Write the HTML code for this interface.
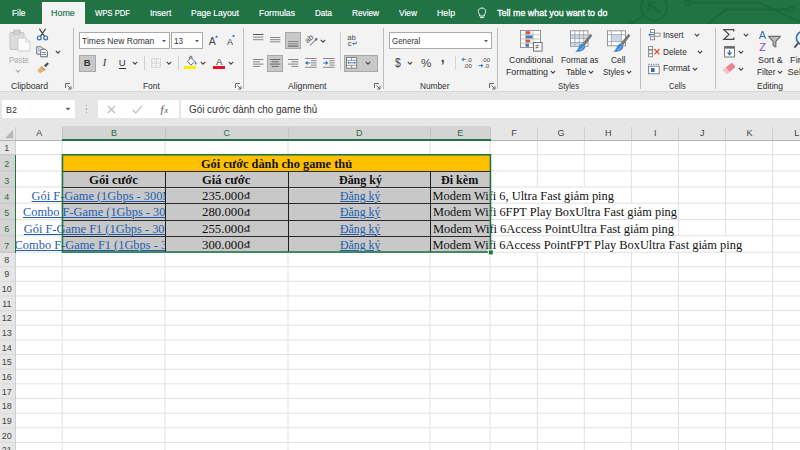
<!DOCTYPE html>
<html lang="vi"><head><meta charset="utf-8"><title>Excel</title>
<style>
html,body{margin:0;padding:0}
body{width:800px;height:450px;overflow:hidden;background:#fff;position:relative;font-family:'Liberation Sans', sans-serif}
#app{position:absolute;left:0;top:0;width:800px;height:450px;overflow:hidden;background:#fff}
#app div,#app span,#app svg{position:absolute;display:block;white-space:pre}
#app svg{overflow:visible}
</style></head><body><div id="app">
<div style="left:0px;top:0px;width:800px;height:24px;background:#217346;"></div>
<svg style="left:600px;top:0px" width="200" height="24" viewBox="0 0 200 24"><g fill="none" stroke="#1b683c" stroke-width="2.1">
<circle cx="54.2" cy="7.6" r="13"/><path d="M59.6 12.6 L50 3.6 M49 10 L49 2.6 L56.4 2.6" stroke-width="2.8"/>
<path d="M31.3 22 Q38 21 42 16" stroke-width="1.6"/><circle cx="31" cy="22.6" r="1.8" stroke-width="1.4"/>
<circle cx="87.6" cy="2.7" r="2.3" stroke-width="1.6"/><path d="M90 2.7 L159.6 2.7 L182 13.5 L200 22" stroke-width="1.9"/>
<path d="M107 25 L125.6 9.5 L188 9.5" stroke-width="1.9"/><circle cx="191.4" cy="9.2" r="2.5" stroke-width="1.6"/>
</g></svg>
<div style="left:42px;top:2px;width:42.5px;height:23px;background:#f3f3f3;"></div>
<span style="left:11.80px;top:5.70px;height:14px;line-height:14px;font:normal normal 9px/14px 'Liberation Sans', sans-serif;color:#fff;transform:scaleX(0.9231);transform-origin:0 0;-webkit-text-stroke:0.15px #fff;">File</span>
<span style="left:50.80px;top:5.70px;height:14px;line-height:14px;font:normal normal 9px/14px 'Liberation Sans', sans-serif;color:#217346;transform:scaleX(0.9910);transform-origin:0 0;-webkit-text-stroke:0.15px #217346;">Home</span>
<span style="left:95.00px;top:5.70px;height:14px;line-height:14px;font:normal normal 9px/14px 'Liberation Sans', sans-serif;color:#fff;transform:scaleX(0.8533);transform-origin:0 0;-webkit-text-stroke:0.15px #fff;">WPS PDF</span>
<span style="left:149.50px;top:5.70px;height:14px;line-height:14px;font:normal normal 9px/14px 'Liberation Sans', sans-serif;color:#fff;transform:scaleX(0.9460);transform-origin:0 0;-webkit-text-stroke:0.15px #fff;">Insert</span>
<span style="left:191.00px;top:5.70px;height:14px;line-height:14px;font:normal normal 9px/14px 'Liberation Sans', sans-serif;color:#fff;transform:scaleX(0.9496);transform-origin:0 0;-webkit-text-stroke:0.15px #fff;">Page Layout</span>
<span style="left:258.50px;top:5.70px;height:14px;line-height:14px;font:normal normal 9px/14px 'Liberation Sans', sans-serif;color:#fff;transform:scaleX(0.9596);transform-origin:0 0;-webkit-text-stroke:0.15px #fff;">Formulas</span>
<span style="left:314.50px;top:5.70px;height:14px;line-height:14px;font:normal normal 9px/14px 'Liberation Sans', sans-serif;color:#fff;transform:scaleX(0.8940);transform-origin:0 0;-webkit-text-stroke:0.15px #fff;">Data</span>
<span style="left:352.00px;top:5.70px;height:14px;line-height:14px;font:normal normal 9px/14px 'Liberation Sans', sans-serif;color:#fff;transform:scaleX(0.9148);transform-origin:0 0;-webkit-text-stroke:0.15px #fff;">Review</span>
<span style="left:398.50px;top:5.70px;height:14px;line-height:14px;font:normal normal 9px/14px 'Liberation Sans', sans-serif;color:#fff;transform:scaleX(0.9298);transform-origin:0 0;-webkit-text-stroke:0.15px #fff;">View</span>
<span style="left:437.00px;top:5.70px;height:14px;line-height:14px;font:normal normal 9px/14px 'Liberation Sans', sans-serif;color:#fff;transform:scaleX(0.9722);transform-origin:0 0;-webkit-text-stroke:0.15px #fff;">Help</span>
<span style="left:497.00px;top:5.70px;height:14px;line-height:14px;font:normal normal 9px/14px 'Liberation Sans', sans-serif;color:#fff;transform:scaleX(0.9949);transform-origin:0 0;-webkit-text-stroke:0.3px #fff;">Tell me what you want to do</span>
<svg style="left:476px;top:5px" width="12" height="15" viewBox="0 0 12 15"><g fill="none" stroke="#fff" stroke-width="1"><path d="M3.6 9.2 C1.6 7.6 1.6 3.2 6 3 C10.4 3.2 10.4 7.6 8.4 9.2 L8.4 11 L3.6 11 Z"/><path d="M4.2 12.6 L7.8 12.6"/></g></svg>
<div style="left:0px;top:24px;width:800px;height:67.5px;background:#f3f3f3;"></div>
<div style="left:0px;top:91px;width:800px;height:1px;background:#d8d8d8;"></div>
<div style="left:73px;top:28px;width:1px;height:61px;background:#bebebe;"></div>
<div style="left:243px;top:28px;width:1px;height:61px;background:#bebebe;"></div>
<div style="left:383px;top:28px;width:1px;height:61px;background:#bebebe;"></div>
<div style="left:497px;top:28px;width:1px;height:61px;background:#bebebe;"></div>
<div style="left:640px;top:28px;width:1px;height:61px;background:#bebebe;"></div>
<div style="left:715px;top:28px;width:1px;height:61px;background:#bebebe;"></div>
<span style="left:10.50px;top:79.00px;height:14px;line-height:14px;font:normal normal 9.3px/14px 'Liberation Sans', sans-serif;color:#2e2e2e;transform:scaleX(0.9297);transform-origin:0 0;">Clipboard</span>
<span style="left:143.30px;top:79.00px;height:14px;line-height:14px;font:normal normal 9.3px/14px 'Liberation Sans', sans-serif;color:#2e2e2e;transform:scaleX(0.8974);transform-origin:0 0;">Font</span>
<span style="left:288.00px;top:79.00px;height:14px;line-height:14px;font:normal normal 9.3px/14px 'Liberation Sans', sans-serif;color:#2e2e2e;transform:scaleX(0.9312);transform-origin:0 0;">Alignment</span>
<span style="left:419.50px;top:79.00px;height:14px;line-height:14px;font:normal normal 9.3px/14px 'Liberation Sans', sans-serif;color:#2e2e2e;transform:scaleX(0.8918);transform-origin:0 0;">Number</span>
<span style="left:558.00px;top:79.00px;height:14px;line-height:14px;font:normal normal 9.3px/14px 'Liberation Sans', sans-serif;color:#2e2e2e;transform:scaleX(0.8291);transform-origin:0 0;">Styles</span>
<span style="left:668.80px;top:79.00px;height:14px;line-height:14px;font:normal normal 9.3px/14px 'Liberation Sans', sans-serif;color:#2e2e2e;transform:scaleX(0.8079);transform-origin:0 0;">Cells</span>
<span style="left:757.00px;top:79.00px;height:14px;line-height:14px;font:normal normal 9.3px/14px 'Liberation Sans', sans-serif;color:#2e2e2e;transform:scaleX(0.9143);transform-origin:0 0;">Editing</span>
<svg style="left:64.5px;top:83px" width="7" height="7" viewBox="0 0 7 7"><path d="M0.5 5 L0.5 0.5 L5 0.5" fill="none" stroke="#666" stroke-width="1"/><path d="M2.5 2.5 L6 6 M6 3.2 L6 6 L3.2 6" fill="none" stroke="#666" stroke-width="1"/></svg>
<svg style="left:235px;top:83px" width="7" height="7" viewBox="0 0 7 7"><path d="M0.5 5 L0.5 0.5 L5 0.5" fill="none" stroke="#666" stroke-width="1"/><path d="M2.5 2.5 L6 6 M6 3.2 L6 6 L3.2 6" fill="none" stroke="#666" stroke-width="1"/></svg>
<svg style="left:374px;top:83px" width="7" height="7" viewBox="0 0 7 7"><path d="M0.5 5 L0.5 0.5 L5 0.5" fill="none" stroke="#666" stroke-width="1"/><path d="M2.5 2.5 L6 6 M6 3.2 L6 6 L3.2 6" fill="none" stroke="#666" stroke-width="1"/></svg>
<svg style="left:489px;top:83px" width="7" height="7" viewBox="0 0 7 7"><path d="M0.5 5 L0.5 0.5 L5 0.5" fill="none" stroke="#666" stroke-width="1"/><path d="M2.5 2.5 L6 6 M6 3.2 L6 6 L3.2 6" fill="none" stroke="#666" stroke-width="1"/></svg>
<svg style="left:9px;top:29px" width="22" height="23" viewBox="0 0 22 23"><rect x="1" y="3.5" width="14" height="17" rx="1" fill="#dcdcdc" stroke="#c4c4c4"/>
<rect x="4.5" y="1" width="7" height="4.5" rx="1" fill="#cfcfcf" stroke="#bcbcbc" stroke-width=".8"/>
<path d="M9 9 L17 9 L21 13 L21 22 L9 22 Z" fill="#fbfbfb" stroke="#c9c9c9" stroke-width=".9"/><path d="M17 9 L17 13 L21 13" fill="none" stroke="#c9c9c9" stroke-width=".9"/></svg>
<span style="left:8.80px;top:53.00px;height:14px;line-height:14px;font:normal normal 9px/14px 'Liberation Sans', sans-serif;color:#a6a6a6;transform:scaleX(0.8473);transform-origin:0 0;">Paste</span>
<svg style="left:13.5px;top:67.3px" width="8" height="8" viewBox="-4 -4 8 8"><path d="M-2.2 -1.1 L0 1.1 L2.2 -1.1" fill="none" stroke="#b0b0b0" stroke-width="1.1"/></svg>
<svg style="left:36px;top:28px" width="13" height="13" viewBox="0 0 13 13"><g fill="none" stroke-linecap="round"><path d="M3.6 1.2 L8.4 8.2 M9.4 1.2 L4.6 8.2" stroke="#444" stroke-width="1.2"/>
<circle cx="3.3" cy="9.9" r="1.9" stroke="#2f6fb7" stroke-width="1.2"/><circle cx="9.7" cy="9.9" r="1.9" stroke="#2f6fb7" stroke-width="1.2"/></g></svg>
<svg style="left:36px;top:45.5px" width="13" height="12" viewBox="0 0 13 12"><g fill="#fff" stroke="#555" stroke-width=".9"><path d="M0.8 0.8 L5.2 0.8 L7.2 2.8 L7.2 8 L0.8 8 Z"/><path d="M4.8 3.2 L9.2 3.2 L11.4 5.4 L11.4 10.8 L4.8 10.8 Z"/></g>
<path d="M6.2 6.5 L10 6.5 M6.2 8.5 L10 8.5 M2 3 L3.8 3 M2 5 L3.8 5" stroke="#2f6fb7" stroke-width=".8"/></svg>
<svg style="left:54px;top:48px" width="8" height="8" viewBox="-4 -4 8 8"><path d="M-2.2 -1.1 L0 1.1 L2.2 -1.1" fill="none" stroke="#444" stroke-width="1.1"/></svg>
<svg style="left:36.5px;top:62px" width="12" height="12" viewBox="0 0 12 12"><path d="M7.2 3.6 L10.4 0.8 L11.4 1.8 L8.6 5" fill="#555" stroke="#444" stroke-width=".8"/>
<path d="M4.6 4.4 L7.8 7.6 L6.4 9" fill="#666" stroke="#555" stroke-width=".6"/>
<path d="M4.4 4.6 L7.4 7.8 L3.2 11 L0.8 8.4 Z" fill="#e9b56c" stroke="#d79a44" stroke-width=".6"/></svg>
<div style="left:79px;top:32.4px;width:90.6px;height:16.4px;background:#fff;box-sizing:border-box;border:1px solid #ababab"></div>
<span style="left:82.20px;top:34.00px;height:14px;line-height:14px;font:normal normal 9px/14px 'Liberation Sans', sans-serif;color:#333;transform:scaleX(0.9490);transform-origin:0 0;">Times New Roman</span>
<svg style="left:159.8px;top:37.2px" width="8" height="8" viewBox="-4 -4 8 8"><path d="M-1.9 -0.95 L1.9 -0.95 L0 1.25 Z" fill="#555"/></svg>
<div style="left:171px;top:32.4px;width:32px;height:16.4px;background:#fff;box-sizing:border-box;border:1px solid #ababab"></div>
<span style="left:173.90px;top:34.00px;height:14px;line-height:14px;font:normal normal 9px/14px 'Liberation Sans', sans-serif;color:#333;transform:scaleX(0.8886);transform-origin:0 0;">13</span>
<svg style="left:193px;top:37.2px" width="8" height="8" viewBox="-4 -4 8 8"><path d="M-1.9 -0.95 L1.9 -0.95 L0 1.25 Z" fill="#555"/></svg>
<span style="left:208.80px;top:33.30px;height:16px;line-height:16px;font:normal normal 10.5px/16px 'Liberation Sans', sans-serif;color:#444;">A</span>
<svg style="left:215px;top:35.2px" width="4" height="3" viewBox="0 0 4 3"><path d="M0 2.4 L1.6 0.3 L3.2 2.4 Z" fill="#2f6fb7"/></svg>
<span style="left:227.00px;top:35.00px;height:14px;line-height:14px;font:normal normal 9px/14px 'Liberation Sans', sans-serif;color:#444;">A</span>
<svg style="left:232.4px;top:35.2px" width="4" height="3" viewBox="0 0 4 3"><path d="M0 0.3 L1.6 2.4 L3.2 0.3 Z" fill="#2f6fb7"/></svg>
<div style="left:79px;top:55px;width:16.6px;height:16.6px;background:#c8c8c8;box-sizing:border-box;border:1px solid #a9a9a9"></div>
<span style="left:83.76px;top:56.00px;height:14px;line-height:14px;font:normal bold 9.5px/14px 'Liberation Sans', sans-serif;color:#333;">B</span>
<span style="left:102.65px;top:55.00px;height:16px;line-height:16px;font:italic normal 10.5px/16px 'Liberation Serif', serif;color:#333;">I</span>
<span style="left:118.86px;top:55.60px;height:14px;line-height:14px;font:normal normal 9.5px/14px 'Liberation Sans', sans-serif;color:#333;">U</span>
<div style="left:119.2px;top:68px;width:6.4px;height:1px;background:#333;"></div>
<svg style="left:131.3px;top:59.3px" width="8" height="8" viewBox="-4 -4 8 8"><path d="M-2.2 -1.1 L0 1.1 L2.2 -1.1" fill="none" stroke="#444" stroke-width="1.1"/></svg>
<div style="left:144px;top:56px;width:1px;height:14px;background:#d0d0d0;"></div>
<svg style="left:151px;top:58px" width="11" height="11" viewBox="0 0 11 11"><g fill="none" stroke="#c4c4c4" stroke-width="1" stroke-dasharray="1.2 0.8"><rect x="0.7" y="0.7" width="8.8" height="8.6"/><path d="M5.1 0.7 L5.1 9.3 M0.7 5 L9.5 5"/></g></svg>
<svg style="left:165.3px;top:59.3px" width="8" height="8" viewBox="-4 -4 8 8"><path d="M-2.2 -1.1 L0 1.1 L2.2 -1.1" fill="none" stroke="#444" stroke-width="1.1"/></svg>
<div style="left:178px;top:56px;width:1px;height:14px;background:#d0d0d0;"></div>
<svg style="left:185px;top:55.5px" width="12" height="10" viewBox="0 0 12 10"><path d="M2.4 5.2 L6 1.6 L9.8 5.4 L6 9.2 Z" fill="#fff" stroke="#555" stroke-width=".9" stroke-linejoin="round"/><path d="M4.6 3.4 L4.6 1.4 C4.6 -0.2 7 -0.2 7 1.4 L7 2.6" fill="none" stroke="#555" stroke-width=".9"/>
<path d="M10.6 5.4 C11.8 7 11.8 8.4 10.7 8.6 C9.6 8.4 9.6 7 10.6 5.4Z" fill="#2f6fb7"/></svg>
<div style="left:184.3px;top:66px;width:11.8px;height:3px;background:#ffeb00;"></div>
<svg style="left:199.3px;top:59.3px" width="8" height="8" viewBox="-4 -4 8 8"><path d="M-2.2 -1.1 L0 1.1 L2.2 -1.1" fill="none" stroke="#444" stroke-width="1.1"/></svg>
<span style="left:216.03px;top:53.70px;height:15px;line-height:15px;font:normal normal 9.8px/15px 'Liberation Sans', sans-serif;color:#444;">A</span>
<div style="left:213px;top:66px;width:11.6px;height:3px;background:#e8112d;"></div>
<svg style="left:227.3px;top:59.3px" width="8" height="8" viewBox="-4 -4 8 8"><path d="M-2.2 -1.1 L0 1.1 L2.2 -1.1" fill="none" stroke="#444" stroke-width="1.1"/></svg>
<svg style="left:252.7px;top:33.6px" width="10.4" height="7.800000000000001" viewBox="0 0 10.4 7.800000000000001"><rect x="0.00" y="0.00" width="10.40" height="1" fill="#555"/><rect x="0.00" y="2.60" width="10.40" height="1" fill="#858585"/><rect x="0.00" y="5.20" width="10.40" height="1" fill="#858585"/></svg>
<svg style="left:270.2px;top:37.4px" width="10.4" height="6.6000000000000005" viewBox="0 0 10.4 6.6000000000000005"><rect x="0.00" y="0.00" width="10.40" height="1" fill="#858585"/><rect x="0.00" y="2.20" width="10.40" height="1" fill="#858585"/><rect x="0.00" y="4.40" width="10.40" height="1" fill="#858585"/></svg>
<div style="left:285px;top:32px;width:16px;height:16.7px;background:#c8c8c8;box-sizing:border-box;border:1px solid #a9a9a9"></div>
<svg style="left:287.8px;top:41.2px" width="10.4" height="6.8999999999999995" viewBox="0 0 10.4 6.8999999999999995"><rect x="0.00" y="0.00" width="10.40" height="1" fill="#858585"/><rect x="0.00" y="2.30" width="10.40" height="1" fill="#858585"/><rect x="0.00" y="4.60" width="10.40" height="1" fill="#555"/></svg>
<svg style="left:304.5px;top:33.5px" width="14" height="13" viewBox="0 0 14 13"><g transform="translate(2.6 9.6) rotate(-43)"><text x="0" y="0" font-family="Liberation Sans, sans-serif" font-size="7.8" fill="#444">ab</text></g>
<path d="M4.8 11.6 L11.2 5.4" stroke="#555" stroke-width="1"/><path d="M12.6 4 L9.6 4.8 L11.8 7 Z" fill="#555"/></svg>
<svg style="left:318.7px;top:37.2px" width="8" height="8" viewBox="-4 -4 8 8"><path d="M-2.2 -1.1 L0 1.1 L2.2 -1.1" fill="none" stroke="#444" stroke-width="1.1"/></svg>
<div style="left:340px;top:32px;width:1px;height:38px;background:#d0d0d0;"></div>
<svg style="left:346.5px;top:34px" width="12" height="13" viewBox="0 0 12 13"><text x="0.3" y="6.2" font-family="Liberation Sans, sans-serif" font-size="7.6" fill="#444">ab</text>
<text x="0.8" y="11.6" font-family="Liberation Sans, sans-serif" font-size="7.6" fill="#444">c</text>
<path d="M9.4 7.6 L9.4 9.6 L6.4 9.6" fill="none" stroke="#2f6fb7" stroke-width=".9"/><path d="M5.2 9.6 L7.2 8.2 L7.2 11 Z" fill="#2f6fb7"/></svg>
<svg style="left:252.7px;top:58.7px" width="10.4" height="9.2" viewBox="0 0 10.4 9.2"><rect x="0.00" y="0.00" width="10.40" height="1" fill="#858585"/><rect x="0.00" y="2.30" width="7.07" height="1" fill="#858585"/><rect x="0.00" y="4.60" width="10.40" height="1" fill="#858585"/><rect x="0.00" y="6.90" width="7.07" height="1" fill="#858585"/></svg>
<div style="left:267px;top:55px;width:16px;height:16.6px;background:#c8c8c8;box-sizing:border-box;border:1px solid #a9a9a9"></div>
<svg style="left:269.9px;top:58.7px" width="10.4" height="9.2" viewBox="0 0 10.4 9.2"><rect x="0.00" y="0.00" width="10.40" height="1" fill="#6a6a6a"/><rect x="1.66" y="2.30" width="7.07" height="1" fill="#6a6a6a"/><rect x="0.00" y="4.60" width="10.40" height="1" fill="#6a6a6a"/><rect x="1.66" y="6.90" width="7.07" height="1" fill="#6a6a6a"/></svg>
<svg style="left:287.6px;top:58.7px" width="10.4" height="9.2" viewBox="0 0 10.4 9.2"><rect x="0.00" y="0.00" width="10.40" height="1" fill="#858585"/><rect x="3.33" y="2.30" width="7.07" height="1" fill="#858585"/><rect x="0.00" y="4.60" width="10.40" height="1" fill="#858585"/><rect x="3.33" y="6.90" width="7.07" height="1" fill="#858585"/></svg>
<svg style="left:305.3px;top:57.8px" width="12" height="10" viewBox="0 0 12 10"><g fill="#8a8a8a"><rect x="0" y="0" width="11.6" height="1"/><rect x="6" y="2.2" width="5.6" height="1"/><rect x="6" y="4.4" width="5.6" height="1"/><rect x="6" y="6.6" width="5.6" height="1"/><rect x="0" y="8.8" width="11.6" height="1"/></g>
<path d="M0 4.9 L2.6 2.7 L2.6 4.4 L5.2 4.4 L5.2 5.4 L2.6 5.4 L2.6 7.1 Z" fill="#2f6fb7"/></svg>
<svg style="left:323px;top:57.8px" width="12" height="10" viewBox="0 0 12 10"><g fill="#8a8a8a"><rect x="0" y="0" width="11.6" height="1"/><rect x="6.2" y="2.2" width="5.4" height="1"/><rect x="6.2" y="4.4" width="5.4" height="1"/><rect x="6.2" y="6.6" width="5.4" height="1"/><rect x="0" y="8.8" width="11.6" height="1"/></g>
<path d="M5.4 4.9 L2.8 2.7 L2.8 4.4 L0.2 4.4 L0.2 5.4 L2.8 5.4 L2.8 7.1 Z" fill="#2f6fb7"/></svg>
<div style="left:343.5px;top:55px;width:34.4px;height:16.6px;background:#c8c8c8;box-sizing:border-box;border:1px solid #a9a9a9"></div>
<svg style="left:346px;top:57px" width="12" height="12" viewBox="0 0 12 12"><rect x="0.5" y="0.5" width="10.2" height="10.6" fill="#fff" stroke="#777" stroke-width=".9"/><path d="M0.5 3.3 L10.7 3.3 M0.5 8.3 L10.7 8.3 M5.6 0.5 L5.6 3.3 M5.6 8.3 L5.6 11.1" stroke="#777" stroke-width=".8" fill="none"/>
<path d="M2 5.8 L9.2 5.8" stroke="#2f6fb7" stroke-width=".9"/><path d="M1.2 5.8 L3 4.5 L3 7.1 Z M10 5.8 L8.2 4.5 L8.2 7.1 Z" fill="#2f6fb7"/></svg>
<svg style="left:364.2px;top:59.3px" width="8" height="8" viewBox="-4 -4 8 8"><path d="M-2.2 -1.1 L0 1.1 L2.2 -1.1" fill="none" stroke="#444" stroke-width="1.1"/></svg>
<div style="left:389px;top:32.4px;width:102.7px;height:16.4px;background:#fff;box-sizing:border-box;border:1px solid #ababab"></div>
<span style="left:392.30px;top:34.00px;height:14px;line-height:14px;font:normal normal 9px/14px 'Liberation Sans', sans-serif;color:#333;transform:scaleX(0.8804);transform-origin:0 0;">General</span>
<svg style="left:482.3px;top:37.2px" width="8" height="8" viewBox="-4 -4 8 8"><path d="M-1.9 -0.95 L1.9 -0.95 L0 1.25 Z" fill="#555"/></svg>
<span style="left:394.60px;top:53.80px;height:18px;line-height:18px;font:normal normal 12px/18px 'Liberation Sans', sans-serif;color:#444;transform:scaleX(0.8673);transform-origin:0 0;">$</span>
<svg style="left:406px;top:59.3px" width="8" height="8" viewBox="-4 -4 8 8"><path d="M-2.2 -1.1 L0 1.1 L2.2 -1.1" fill="none" stroke="#444" stroke-width="1.1"/></svg>
<span style="left:421.00px;top:55.00px;height:16px;line-height:16px;font:normal normal 10.5px/16px 'Liberation Sans', sans-serif;color:#444;transform:scaleX(1.1023);transform-origin:0 0;">%</span>
<span style="left:440.80px;top:47.00px;height:20px;line-height:20px;font:normal bold 14px/20px 'Liberation Sans', sans-serif;color:#444;">,</span>
<div style="left:454.5px;top:56px;width:1px;height:14px;background:#d5d5d5;"></div>
<svg style="left:460.8px;top:56.6px" width="12" height="12" viewBox="0 0 12 12"><path d="M0.4 2.4 L2.6 0.6 L2.6 4.2 Z" fill="#2f6fb7"/><path d="M2.4 2.4 L5 2.4" stroke="#2f6fb7" stroke-width=".9"/>
<text x="5.6" y="5" font-family="Liberation Sans, sans-serif" font-size="6.1" fill="#444">.0</text><text x="2.4" y="10.6" font-family="Liberation Sans, sans-serif" font-size="6.1" fill="#444">.00</text></svg>
<svg style="left:478px;top:56.6px" width="12" height="12" viewBox="0 0 12 12"><text x="3.6" y="5" font-family="Liberation Sans, sans-serif" font-size="6.1" fill="#444">.00</text><text x="6" y="10.6" font-family="Liberation Sans, sans-serif" font-size="6.1" fill="#444">.0</text>
<path d="M5.4 8.6 L3.2 6.8 L3.2 10.4 Z" fill="#2f6fb7"/><path d="M0.6 8.6 L3.4 8.6" stroke="#2f6fb7" stroke-width=".9"/></svg>
<svg style="left:520px;top:30px" width="23" height="22" viewBox="0 0 23 22"><rect x="0.5" y="0.5" width="20" height="17" fill="#fff" stroke="#8a8a8a" stroke-width=".9"/>
<path d="M0.5 4.7 L20.5 4.7 M0.5 9 L20.5 9 M0.5 13.2 L20.5 13.2 M5.5 0.5 L5.5 17.5 M13 0.5 L13 17.5" stroke="#b5b5b5" stroke-width=".8"/>
<rect x="6" y="1.2" width="4.2" height="3" fill="#d9573b"/><rect x="6" y="5.4" width="6.6" height="3" fill="#3f79c1"/><rect x="6" y="9.6" width="4.2" height="3" fill="#d9573b"/><rect x="6" y="13.8" width="3" height="3" fill="#3f79c1"/>
<rect x="13.5" y="12.5" width="8.6" height="8.6" fill="#f7f7f7" stroke="#666" stroke-width=".9"/><text x="15.3" y="19.4" font-family="Liberation Sans, sans-serif" font-size="7" fill="#444">≠</text></svg>
<span style="left:508.80px;top:53.00px;height:14px;line-height:14px;font:normal normal 9.3px/14px 'Liberation Sans', sans-serif;color:#2e2e2e;transform:scaleX(0.9499);transform-origin:0 0;">Conditional</span>
<span style="left:505.50px;top:64.70px;height:14px;line-height:14px;font:normal normal 9.3px/14px 'Liberation Sans', sans-serif;color:#2e2e2e;transform:scaleX(0.9451);transform-origin:0 0;">Formatting</span>
<svg style="left:549px;top:68.3px" width="8" height="8" viewBox="-4 -4 8 8"><path d="M-2.2 -1.1 L0 1.1 L2.2 -1.1" fill="none" stroke="#444" stroke-width="1.1"/></svg>
<svg style="left:569.5px;top:30px" width="23" height="22" viewBox="0 0 23 22"><rect x="0.5" y="0.8" width="17.5" height="15.5" fill="#fff" stroke="#8a8a8a" stroke-width=".9"/>
<rect x="1" y="5" width="16.5" height="3.4" fill="#c7d9ef"/><rect x="1" y="12" width="13" height="3.6" fill="#c7d9ef"/>
<path d="M0.5 4.7 L18 4.7 M0.5 8.6 L18 8.6 M0.5 12.4 L18 12.4 M4.9 0.8 L4.9 16.3 M9.3 0.8 L9.3 16.3 M13.7 0.8 L13.7 16.3" stroke="#9d9d9d" stroke-width=".8"/>
<path d="M22.4 5.4 L20.4 3.8 L12.4 13.4 L15 15.6 Z" fill="#7a7a7a"/><path d="M12.2 13.6 L15.2 16 C15.6 19.4 11.4 22.6 5.2 21.6 C9 19.8 8.4 15 12.2 13.6 Z" fill="#3f86d4"/><path d="M9.4 19.8 C11.4 19.4 12.8 18 13.2 16.4" stroke="#9cc4ee" stroke-width="1" fill="none"/></svg>
<span style="left:560.50px;top:53.00px;height:14px;line-height:14px;font:normal normal 9.3px/14px 'Liberation Sans', sans-serif;color:#2e2e2e;transform:scaleX(0.8959);transform-origin:0 0;">Format as</span>
<span style="left:566.30px;top:64.70px;height:14px;line-height:14px;font:normal normal 9.3px/14px 'Liberation Sans', sans-serif;color:#2e2e2e;transform:scaleX(0.9085);transform-origin:0 0;">Table</span>
<svg style="left:586.5px;top:68.3px" width="8" height="8" viewBox="-4 -4 8 8"><path d="M-2.2 -1.1 L0 1.1 L2.2 -1.1" fill="none" stroke="#444" stroke-width="1.1"/></svg>
<svg style="left:607px;top:30px" width="24" height="22" viewBox="0 0 24 22"><rect x="0.5" y="0.8" width="18" height="15" fill="#fff" stroke="#8a8a8a" stroke-width=".9"/>
<rect x="4.6" y="4.8" width="9.6" height="6.6" fill="#c7d9ef"/>
<path d="M0.5 4.6 L18.5 4.6 M0.5 11.6 L18.5 11.6 M4.4 0.8 L4.4 15.8 M14.4 0.8 L14.4 15.8" stroke="#9d9d9d" stroke-width=".8"/>
<path d="M23.4 5.4 L21.4 3.8 L13.4 13.4 L16 15.6 Z" fill="#7a7a7a"/><path d="M13.2 13.6 L16.2 16 C16.6 19.4 12.4 22.6 6.2 21.6 C10 19.8 9.4 15 13.2 13.6 Z" fill="#3f86d4"/><path d="M10.4 19.8 C12.4 19.4 13.8 18 14.2 16.4" stroke="#9cc4ee" stroke-width="1" fill="none"/></svg>
<span style="left:610.60px;top:53.00px;height:14px;line-height:14px;font:normal normal 9.3px/14px 'Liberation Sans', sans-serif;color:#2e2e2e;transform:scaleX(0.8991);transform-origin:0 0;">Cell</span>
<span style="left:602.60px;top:64.70px;height:14px;line-height:14px;font:normal normal 9.3px/14px 'Liberation Sans', sans-serif;color:#2e2e2e;transform:scaleX(0.8449);transform-origin:0 0;">Styles</span>
<svg style="left:625px;top:68.3px" width="8" height="8" viewBox="-4 -4 8 8"><path d="M-2.2 -1.1 L0 1.1 L2.2 -1.1" fill="none" stroke="#444" stroke-width="1.1"/></svg>
<svg style="left:648px;top:29px" width="13" height="12" viewBox="0 0 13 12"><rect x="2.6" y="0.6" width="4" height="3" fill="#fff" stroke="#777" stroke-width=".8"/><rect x="2.6" y="7.8" width="4" height="3" fill="#fff" stroke="#777" stroke-width=".8"/><rect x="6.6" y="4.2" width="5.4" height="3" fill="#fff" stroke="#777" stroke-width=".8"/>
<path d="M1 5.7 L6 5.7" stroke="#2f6fb7" stroke-width="1"/><path d="M0.2 5.7 L2.4 4 L2.4 7.4 Z" fill="#2f6fb7"/></svg>
<span style="left:662.60px;top:27.80px;height:14px;line-height:14px;font:normal normal 9.3px/14px 'Liberation Sans', sans-serif;color:#2e2e2e;transform:scaleX(0.8854);transform-origin:0 0;">Insert</span>
<svg style="left:693.2px;top:31px" width="8" height="8" viewBox="-4 -4 8 8"><path d="M-2.2 -1.1 L0 1.1 L2.2 -1.1" fill="none" stroke="#444" stroke-width="1.1"/></svg>
<svg style="left:648px;top:46px" width="13" height="12" viewBox="0 0 13 12"><rect x="0.6" y="0.6" width="4" height="3" fill="#fff" stroke="#777" stroke-width=".8"/><rect x="0.6" y="7.8" width="4" height="3" fill="#fff" stroke="#777" stroke-width=".8"/><rect x="0.6" y="4.2" width="4" height="3" fill="#fff" stroke="#777" stroke-width=".8"/>
<path d="M6.4 3 L11.4 8.4 M11.4 3 L6.4 8.4" stroke="#e0492f" stroke-width="1.2"/></svg>
<span style="left:662.60px;top:44.80px;height:14px;line-height:14px;font:normal normal 9.3px/14px 'Liberation Sans', sans-serif;color:#2e2e2e;transform:scaleX(0.8819);transform-origin:0 0;">Delete</span>
<svg style="left:696px;top:48px" width="8" height="8" viewBox="-4 -4 8 8"><path d="M-2.2 -1.1 L0 1.1 L2.2 -1.1" fill="none" stroke="#444" stroke-width="1.1"/></svg>
<svg style="left:648px;top:62.5px" width="13" height="12" viewBox="0 0 13 12"><path d="M1 0.8 L1 2 M3.4 0.8 L3.4 2 M5.8 0.8 L5.8 2 M8.2 0.8 L8.2 2 M10.6 0.8 L10.6 2" stroke="#2f6fb7" stroke-width=".9"/>
<rect x="0.6" y="3.2" width="10.6" height="7.6" fill="#fff" stroke="#777" stroke-width=".9"/><rect x="3" y="5" width="3.6" height="4" fill="#2f6fb7"/></svg>
<span style="left:662.60px;top:61.30px;height:14px;line-height:14px;font:normal normal 9.3px/14px 'Liberation Sans', sans-serif;color:#2e2e2e;transform:scaleX(0.9133);transform-origin:0 0;">Format</span>
<svg style="left:691.2px;top:64.8px" width="8" height="8" viewBox="-4 -4 8 8"><path d="M-2.2 -1.1 L0 1.1 L2.2 -1.1" fill="none" stroke="#444" stroke-width="1.1"/></svg>
<svg style="left:723px;top:29px" width="12" height="11" viewBox="0 0 12 11"><path d="M10.8 2.4 L10.8 0.7 L0.9 0.7 L6 5.5 L0.9 10.3 L10.8 10.3 L10.8 8.6" fill="none" stroke="#444" stroke-width="1.2"/></svg>
<svg style="left:741.5px;top:31px" width="8" height="8" viewBox="-4 -4 8 8"><path d="M-2.2 -1.1 L0 1.1 L2.2 -1.1" fill="none" stroke="#444" stroke-width="1.1"/></svg>
<svg style="left:724px;top:45.5px" width="11" height="12" viewBox="0 0 11 12"><rect x="0.6" y="0.6" width="9.8" height="10.4" fill="#fff" stroke="#666" stroke-width=".9"/><rect x="0.6" y="0.6" width="9.8" height="2" fill="#666"/>
<path d="M5.5 4 L5.5 8" stroke="#2f6fb7" stroke-width="1.3"/><path d="M2.8 6.6 L5.5 9.8 L8.2 6.6 Z" fill="#2f6fb7"/></svg>
<svg style="left:736.5px;top:48px" width="8" height="8" viewBox="-4 -4 8 8"><path d="M-2.2 -1.1 L0 1.1 L2.2 -1.1" fill="none" stroke="#444" stroke-width="1.1"/></svg>
<svg style="left:724px;top:62.5px" width="11" height="11" viewBox="0 0 11 11"><g transform="rotate(-38 5.5 5.5)"><rect x="-0.4" y="2.4" width="11.6" height="5.8" rx="1.2" fill="#ef7f8a"/><rect x="-0.4" y="2.4" width="4" height="5.8" rx="1.2" fill="#f8c4ca"/></g></svg>
<svg style="left:736.5px;top:64.8px" width="8" height="8" viewBox="-4 -4 8 8"><path d="M-2.2 -1.1 L0 1.1 L2.2 -1.1" fill="none" stroke="#444" stroke-width="1.1"/></svg>
<svg style="left:758.5px;top:29.5px" width="23" height="22" viewBox="0 0 23 22"><text x="-0.2" y="9.4" font-family="Liberation Sans, sans-serif" font-size="11" fill="#2f6fb7">A</text>
<text x="0.2" y="20.6" font-family="Liberation Sans, sans-serif" font-size="11" fill="#8a4fb5">Z</text>
<path d="M9.6 6.4 L21.4 6.4 L16.8 11.6 L16.8 17 L14.2 15.4 L14.2 11.6 Z" fill="#b9b9b9" stroke="#6e6e6e" stroke-width="1.2" stroke-linejoin="round"/></svg>
<span style="left:758.00px;top:53.00px;height:14px;line-height:14px;font:normal normal 9.3px/14px 'Liberation Sans', sans-serif;color:#2e2e2e;transform:scaleX(0.9519);transform-origin:0 0;">Sort &amp;</span>
<span style="left:757.00px;top:64.70px;height:14px;line-height:14px;font:normal normal 9.3px/14px 'Liberation Sans', sans-serif;color:#2e2e2e;transform:scaleX(0.8949);transform-origin:0 0;">Filter</span>
<svg style="left:776.3px;top:68.3px" width="8" height="8" viewBox="-4 -4 8 8"><path d="M-2.2 -1.1 L0 1.1 L2.2 -1.1" fill="none" stroke="#444" stroke-width="1.1"/></svg>
<svg style="left:794px;top:30px" width="10" height="22" viewBox="0 0 10 22"><circle cx="9" cy="8" r="6.6" fill="none" stroke="#2f6fb7" stroke-width="1.6"/><path d="M4.4 12.8 L0.4 17.6" stroke="#555" stroke-width="2"/></svg>
<span style="left:790.00px;top:53.00px;height:14px;line-height:14px;font:normal normal 9.3px/14px 'Liberation Sans', sans-serif;color:#2e2e2e;">Find &amp;</span>
<span style="left:787.60px;top:64.70px;height:14px;line-height:14px;font:normal normal 9.3px/14px 'Liberation Sans', sans-serif;color:#2e2e2e;">Select</span>
<div style="left:0px;top:92px;width:800px;height:34px;background:#e6e6e6;"></div>
<div style="left:2px;top:100px;width:73.4px;height:18.2px;background:#fff;border-radius:1px"></div>
<span style="left:6.20px;top:102.50px;height:14px;line-height:14px;font:normal normal 9.5px/14px 'Liberation Sans', sans-serif;color:#333;transform:scaleX(0.9290);transform-origin:0 0;">B2</span>
<svg style="left:63.7px;top:105.4px" width="8" height="8" viewBox="-4 -4 8 8"><path d="M-2.5 -1.25 L2.5 -1.25 L0 1.55 Z" fill="#666"/></svg>
<div style="left:85.8px;top:105.2px;width:1.2px;height:1.2px;background:#9a9a9a;"></div>
<div style="left:85.8px;top:108.4px;width:1.2px;height:1.2px;background:#9a9a9a;"></div>
<div style="left:85.8px;top:111.60000000000001px;width:1.2px;height:1.2px;background:#9a9a9a;"></div>
<div style="left:98px;top:100px;width:80.6px;height:18.2px;background:#fff;border-radius:1px"></div>
<svg style="left:106.5px;top:104.8px" width="9" height="9" viewBox="0 0 9 9"><path d="M0.8 0.8 L8 8 M8 0.8 L0.8 8" stroke="#b9b9b9" stroke-width="1.1" fill="none"/></svg>
<svg style="left:131.5px;top:104.8px" width="11" height="9" viewBox="0 0 11 9"><path d="M0.8 5 L3.8 8 L10 0.8" stroke="#b9b9b9" stroke-width="1.1" fill="none"/></svg>
<span style="left:160.60px;top:101.00px;height:16px;line-height:16px;font:italic normal 11px/16px 'Liberation Serif', serif;color:#555;">f</span>
<span style="left:164.60px;top:104.60px;height:12px;line-height:12px;font:italic normal 8px/12px 'Liberation Serif', serif;color:#555;">x</span>
<div style="left:181px;top:100px;width:619px;height:18.2px;background:#fff;border-radius:1px"></div>
<span style="left:189.30px;top:101.80px;height:15px;line-height:15px;font:normal normal 10px/15px 'Liberation Sans', sans-serif;color:#333;transform:scaleX(0.9862);transform-origin:0 0;">Gói cước dành cho game thủ</span>
<div style="left:0px;top:126px;width:800px;height:15px;background:#e6e6e6;"></div>
<div style="left:0px;top:140px;width:800px;height:1px;background:#b4b4b4;"></div>
<div style="left:62.2px;top:126px;width:428px;height:13px;background:#d4d4d4;"></div>
<div style="left:15px;top:127px;width:1px;height:13px;background:#d0d0d0;"></div>
<div style="left:62px;top:127px;width:1px;height:13px;background:#c2c2c2;"></div>
<div style="left:165px;top:127px;width:1px;height:13px;background:#c2c2c2;"></div>
<div style="left:288px;top:127px;width:1px;height:13px;background:#c2c2c2;"></div>
<div style="left:430px;top:127px;width:1px;height:13px;background:#c2c2c2;"></div>
<div style="left:490px;top:127px;width:1px;height:13px;background:#c2c2c2;"></div>
<div style="left:537px;top:127px;width:1px;height:13px;background:#d0d0d0;"></div>
<div style="left:584px;top:127px;width:1px;height:13px;background:#d0d0d0;"></div>
<div style="left:631px;top:127px;width:1px;height:13px;background:#d0d0d0;"></div>
<div style="left:678px;top:127px;width:1px;height:13px;background:#d0d0d0;"></div>
<div style="left:725px;top:127px;width:1px;height:13px;background:#d0d0d0;"></div>
<div style="left:772px;top:127px;width:1px;height:13px;background:#d0d0d0;"></div>
<div style="left:62px;top:139px;width:429px;height:2px;background:#217346;"></div>
<svg style="left:4px;top:129px" width="10" height="10" viewBox="0 0 10 10"><path d="M9.2 0.8 L9.2 9.2 L0.8 9.2 Z" fill="#b7b7b7"/></svg>
<span style="left:36.14px;top:126.20px;height:14px;line-height:14px;font:normal normal 9px/14px 'Liberation Sans', sans-serif;color:#444;">A</span>
<span style="left:110.89px;top:126.20px;height:14px;line-height:14px;font:normal normal 9px/14px 'Liberation Sans', sans-serif;color:#2a6a47;">B</span>
<span style="left:223.55px;top:126.20px;height:14px;line-height:14px;font:normal normal 9px/14px 'Liberation Sans', sans-serif;color:#2a6a47;">C</span>
<span style="left:356.05px;top:126.20px;height:14px;line-height:14px;font:normal normal 9px/14px 'Liberation Sans', sans-serif;color:#2a6a47;">D</span>
<span style="left:457.29px;top:126.20px;height:14px;line-height:14px;font:normal normal 9px/14px 'Liberation Sans', sans-serif;color:#2a6a47;">E</span>
<span style="left:511.15px;top:126.20px;height:14px;line-height:14px;font:normal normal 9px/14px 'Liberation Sans', sans-serif;color:#444;">F</span>
<span style="left:557.54px;top:126.20px;height:14px;line-height:14px;font:normal normal 9px/14px 'Liberation Sans', sans-serif;color:#444;">G</span>
<span style="left:604.90px;top:126.20px;height:14px;line-height:14px;font:normal normal 9px/14px 'Liberation Sans', sans-serif;color:#444;">H</span>
<span style="left:653.99px;top:126.20px;height:14px;line-height:14px;font:normal normal 9px/14px 'Liberation Sans', sans-serif;color:#444;">I</span>
<span style="left:700.10px;top:126.20px;height:14px;line-height:14px;font:normal normal 9px/14px 'Liberation Sans', sans-serif;color:#444;">J</span>
<span style="left:746.44px;top:126.20px;height:14px;line-height:14px;font:normal normal 9px/14px 'Liberation Sans', sans-serif;color:#444;">K</span>
<span style="left:794.14px;top:126.20px;height:14px;line-height:14px;font:normal normal 9px/14px 'Liberation Sans', sans-serif;color:#444;">L</span>
<div style="left:0px;top:141px;width:15.5px;height:310px;background:#e6e6e6;"></div>
<div style="left:0px;top:155px;width:15.5px;height:97.6px;background:#d4d4d4;"></div>
<div style="left:15px;top:141px;width:1px;height:14px;background:#d0d0d0;"></div>
<div style="left:15px;top:252.2px;width:1px;height:200px;background:#d0d0d0;"></div>
<svg style="left:0px;top:0px" width="800" height="450" viewBox="0 0 800 450"><rect x="16" y="154.10" width="800" height="1" fill="#e2e2e2"/><rect x="0" y="154.10" width="15" height="1" fill="#c4c4c4"/><rect x="16" y="170.50" width="800" height="1" fill="#e2e2e2"/><rect x="0" y="170.50" width="15" height="1" fill="#c4c4c4"/><rect x="16" y="186.50" width="800" height="1" fill="#e2e2e2"/><rect x="0" y="186.50" width="15" height="1" fill="#c4c4c4"/><rect x="16" y="202.70" width="800" height="1" fill="#e2e2e2"/><rect x="0" y="202.70" width="15" height="1" fill="#c4c4c4"/><rect x="16" y="219.00" width="800" height="1" fill="#e2e2e2"/><rect x="0" y="219.00" width="15" height="1" fill="#c4c4c4"/><rect x="16" y="235.30" width="800" height="1" fill="#e2e2e2"/><rect x="0" y="235.30" width="15" height="1" fill="#c4c4c4"/><rect x="16" y="251.70" width="800" height="1" fill="#e2e2e2"/><rect x="0" y="251.70" width="15" height="1" fill="#c4c4c4"/><rect x="16" y="266.15" width="800" height="1" fill="#e2e2e2"/><rect x="0" y="266.15" width="15" height="1" fill="#dadada"/><rect x="16" y="280.80" width="800" height="1" fill="#e2e2e2"/><rect x="0" y="280.80" width="15" height="1" fill="#dadada"/><rect x="16" y="295.45" width="800" height="1" fill="#e2e2e2"/><rect x="0" y="295.45" width="15" height="1" fill="#dadada"/><rect x="16" y="310.10" width="800" height="1" fill="#e2e2e2"/><rect x="0" y="310.10" width="15" height="1" fill="#dadada"/><rect x="16" y="324.75" width="800" height="1" fill="#e2e2e2"/><rect x="0" y="324.75" width="15" height="1" fill="#dadada"/><rect x="16" y="339.40" width="800" height="1" fill="#e2e2e2"/><rect x="0" y="339.40" width="15" height="1" fill="#dadada"/><rect x="16" y="354.05" width="800" height="1" fill="#e2e2e2"/><rect x="0" y="354.05" width="15" height="1" fill="#dadada"/><rect x="16" y="368.70" width="800" height="1" fill="#e2e2e2"/><rect x="0" y="368.70" width="15" height="1" fill="#dadada"/><rect x="16" y="383.35" width="800" height="1" fill="#e2e2e2"/><rect x="0" y="383.35" width="15" height="1" fill="#dadada"/><rect x="16" y="398.00" width="800" height="1" fill="#e2e2e2"/><rect x="0" y="398.00" width="15" height="1" fill="#dadada"/><rect x="16" y="412.65" width="800" height="1" fill="#e2e2e2"/><rect x="0" y="412.65" width="15" height="1" fill="#dadada"/><rect x="16" y="427.30" width="800" height="1" fill="#e2e2e2"/><rect x="0" y="427.30" width="15" height="1" fill="#dadada"/><rect x="16" y="441.95" width="800" height="1" fill="#e2e2e2"/><rect x="0" y="441.95" width="15" height="1" fill="#dadada"/><rect x="16" y="456.60" width="800" height="1" fill="#e2e2e2"/><rect x="0" y="456.60" width="15" height="1" fill="#dadada"/><rect x="16" y="471.25" width="800" height="1" fill="#e2e2e2"/><rect x="0" y="471.25" width="15" height="1" fill="#dadada"/><rect x="61.70" y="141" width="1" height="320" fill="#e2e2e2"/><rect x="164.50" y="141" width="1" height="320" fill="#e2e2e2"/><rect x="287.50" y="141" width="1" height="320" fill="#e2e2e2"/><rect x="429.50" y="141" width="1" height="320" fill="#e2e2e2"/><rect x="489.50" y="141" width="1" height="320" fill="#e2e2e2"/><rect x="536.70" y="141" width="1" height="320" fill="#e2e2e2"/><rect x="583.80" y="141" width="1" height="320" fill="#e2e2e2"/><rect x="630.90" y="141" width="1" height="320" fill="#e2e2e2"/><rect x="678.00" y="141" width="1" height="320" fill="#e2e2e2"/><rect x="725.10" y="141" width="1" height="320" fill="#e2e2e2"/><rect x="772.20" y="141" width="1" height="320" fill="#e2e2e2"/></svg>
<div style="left:14.6px;top:155px;width:1.4px;height:97.6px;background:#217346;"></div>
<span style="left:4.29px;top:141.10px;height:14px;line-height:14px;font:normal normal 9px/14px 'Liberation Sans', sans-serif;color:#444;">1</span>
<span style="left:4.29px;top:157.40px;height:14px;line-height:14px;font:normal normal 9px/14px 'Liberation Sans', sans-serif;color:#2a6a47;">2</span>
<span style="left:4.29px;top:173.60px;height:14px;line-height:14px;font:normal normal 9px/14px 'Liberation Sans', sans-serif;color:#2a6a47;">3</span>
<span style="left:4.29px;top:189.70px;height:14px;line-height:14px;font:normal normal 9px/14px 'Liberation Sans', sans-serif;color:#2a6a47;">4</span>
<span style="left:4.29px;top:205.95px;height:14px;line-height:14px;font:normal normal 9px/14px 'Liberation Sans', sans-serif;color:#2a6a47;">5</span>
<span style="left:4.29px;top:222.25px;height:14px;line-height:14px;font:normal normal 9px/14px 'Liberation Sans', sans-serif;color:#2a6a47;">6</span>
<span style="left:4.29px;top:238.60px;height:14px;line-height:14px;font:normal normal 9px/14px 'Liberation Sans', sans-serif;color:#2a6a47;">7</span>
<span style="left:4.29px;top:252.82px;height:14px;line-height:14px;font:normal normal 9px/14px 'Liberation Sans', sans-serif;color:#444;">8</span>
<span style="left:4.29px;top:267.38px;height:14px;line-height:14px;font:normal normal 9px/14px 'Liberation Sans', sans-serif;color:#444;">9</span>
<span style="left:1.79px;top:282.02px;height:14px;line-height:14px;font:normal normal 9px/14px 'Liberation Sans', sans-serif;color:#444;">10</span>
<span style="left:2.13px;top:296.67px;height:14px;line-height:14px;font:normal normal 9px/14px 'Liberation Sans', sans-serif;color:#444;">11</span>
<span style="left:1.79px;top:311.32px;height:14px;line-height:14px;font:normal normal 9px/14px 'Liberation Sans', sans-serif;color:#444;">12</span>
<span style="left:1.79px;top:325.97px;height:14px;line-height:14px;font:normal normal 9px/14px 'Liberation Sans', sans-serif;color:#444;">13</span>
<span style="left:1.79px;top:340.62px;height:14px;line-height:14px;font:normal normal 9px/14px 'Liberation Sans', sans-serif;color:#444;">14</span>
<span style="left:1.79px;top:355.27px;height:14px;line-height:14px;font:normal normal 9px/14px 'Liberation Sans', sans-serif;color:#444;">15</span>
<span style="left:1.79px;top:369.92px;height:14px;line-height:14px;font:normal normal 9px/14px 'Liberation Sans', sans-serif;color:#444;">16</span>
<span style="left:1.79px;top:384.57px;height:14px;line-height:14px;font:normal normal 9px/14px 'Liberation Sans', sans-serif;color:#444;">17</span>
<span style="left:1.79px;top:399.22px;height:14px;line-height:14px;font:normal normal 9px/14px 'Liberation Sans', sans-serif;color:#444;">18</span>
<span style="left:1.79px;top:413.88px;height:14px;line-height:14px;font:normal normal 9px/14px 'Liberation Sans', sans-serif;color:#444;">19</span>
<span style="left:1.79px;top:428.52px;height:14px;line-height:14px;font:normal normal 9px/14px 'Liberation Sans', sans-serif;color:#444;">20</span>
<span style="left:1.79px;top:443.17px;height:14px;line-height:14px;font:normal normal 9px/14px 'Liberation Sans', sans-serif;color:#444;">21</span>
<span style="left:1.79px;top:457.82px;height:14px;line-height:14px;font:normal normal 9px/14px 'Liberation Sans', sans-serif;color:#444;">22</span>
<svg style="left:0px;top:0px" width="800" height="450" viewBox="0 0 800 450"><rect x="489.00" y="187.50" width="2" height="15.20" fill="#fff"/><rect x="536.20" y="187.50" width="2" height="15.20" fill="#fff"/><rect x="583.30" y="187.50" width="2" height="15.20" fill="#fff"/><rect x="489.00" y="203.70" width="2" height="15.30" fill="#fff"/><rect x="536.20" y="203.70" width="2" height="15.30" fill="#fff"/><rect x="583.30" y="203.70" width="2" height="15.30" fill="#fff"/><rect x="630.40" y="203.70" width="2" height="15.30" fill="#fff"/><rect x="489.00" y="220.00" width="2" height="15.30" fill="#fff"/><rect x="536.20" y="220.00" width="2" height="15.30" fill="#fff"/><rect x="583.30" y="220.00" width="2" height="15.30" fill="#fff"/><rect x="630.40" y="220.00" width="2" height="15.30" fill="#fff"/><rect x="489.00" y="236.30" width="2" height="15.40" fill="#fff"/><rect x="536.20" y="236.30" width="2" height="15.40" fill="#fff"/><rect x="583.30" y="236.30" width="2" height="15.40" fill="#fff"/><rect x="630.40" y="236.30" width="2" height="15.40" fill="#fff"/><rect x="677.50" y="236.30" width="2" height="15.40" fill="#fff"/><rect x="724.60" y="236.30" width="2" height="15.40" fill="#fff"/></svg>
<div style="left:62px;top:155px;width:429px;height:16px;background:#ffc000;"></div>
<div style="left:62px;top:171px;width:429px;height:81.2px;background:#c8c8c8;"></div>
<div style="left:62px;top:171px;width:429px;height:1px;background:#2b2b2b;"></div>
<div style="left:62px;top:187px;width:429px;height:1px;background:#2b2b2b;"></div>
<div style="left:62px;top:203px;width:429px;height:1px;background:#2b2b2b;"></div>
<div style="left:62px;top:220px;width:429px;height:1px;background:#2b2b2b;"></div>
<div style="left:62px;top:236px;width:429px;height:1px;background:#2b2b2b;"></div>
<div style="left:63px;top:188px;width:427px;height:1px;background:#d9d9d9;"></div>
<div style="left:165px;top:171px;width:1px;height:81.2px;background:#1e1e1e;"></div>
<div style="left:288px;top:171px;width:1px;height:81.2px;background:#1e1e1e;"></div>
<div style="left:430px;top:171px;width:1px;height:81.2px;background:#1e1e1e;"></div>
<span style="left:201.30px;top:156.00px;height:16px;line-height:16px;font:normal bold 12.4px/16px 'Liberation Serif', serif;color:#111;transform:scaleX(0.9958);transform-origin:0 0;">Gói cước dành cho game thủ</span>
<span style="left:89.30px;top:172.00px;height:16px;line-height:16px;font:normal bold 12.4px/16px 'Liberation Serif', serif;color:#111;transform:scaleX(1.0279);transform-origin:0 0;">Gói cước</span>
<span style="left:202.10px;top:172.00px;height:16px;line-height:16px;font:normal bold 12.4px/16px 'Liberation Serif', serif;color:#111;transform:scaleX(1.0153);transform-origin:0 0;">Giá cước</span>
<span style="left:338.50px;top:172.00px;height:16px;line-height:16px;font:normal bold 12.4px/16px 'Liberation Serif', serif;color:#111;transform:scaleX(0.9657);transform-origin:0 0;">Đăng ký</span>
<span style="left:440.90px;top:172.00px;height:16px;line-height:16px;font:normal bold 12.4px/16px 'Liberation Serif', serif;color:#111;transform:scaleX(0.9764);transform-origin:0 0;">Đi kèm</span>
<div style="left:16px;top:188.1px;width:148.6px;height:16px;overflow:hidden"><span style="left:15.60px;top:0.00px;height:16px;font:normal normal 12.4px/16px 'Liberation Serif', serif;color:#1f5fae;text-decoration:underline;text-decoration-thickness:1px;text-underline-offset:1.2px;">Gói F-Game (1Gbps - 300Mbps)</span></div>
<span style="left:202.20px;top:188.10px;height:16px;line-height:16px;font:normal normal 12.4px/16px 'Liberation Serif', serif;color:#111;transform:scaleX(1.0352);transform-origin:0 0;">235.000</span>
<span style="left:244.30px;top:187.40px;height:16px;line-height:16px;font:normal normal 9px/16px 'Liberation Serif', serif;color:#111;transform:scaleX(1.2973);transform-origin:0 0;">₫</span>
<span style="left:339.50px;top:188.10px;height:16px;line-height:16px;font:normal normal 12.4px/16px 'Liberation Serif', serif;color:#1f5fae;transform:scaleX(0.9544);transform-origin:0 0;text-decoration:underline;text-decoration-thickness:1px;text-underline-offset:1.2px;">Đăng ký</span>
<span style="left:432.60px;top:188.10px;height:16px;line-height:16px;font:normal normal 12.4px/16px 'Liberation Serif', serif;color:#111;">Modem Wifi 6, Ultra Fast giảm ping</span>
<div style="left:16px;top:204.29999999999998px;width:148.6px;height:16px;overflow:hidden"><span style="left:7.00px;top:0.00px;height:16px;font:normal normal 12.4px/16px 'Liberation Serif', serif;color:#1f5fae;text-decoration:underline;text-decoration-thickness:1px;text-underline-offset:1.2px;">Combo F-Game (1Gbps - 300Mbps)</span></div>
<span style="left:202.20px;top:204.30px;height:16px;line-height:16px;font:normal normal 12.4px/16px 'Liberation Serif', serif;color:#111;transform:scaleX(1.0352);transform-origin:0 0;">280.000</span>
<span style="left:244.30px;top:203.60px;height:16px;line-height:16px;font:normal normal 9px/16px 'Liberation Serif', serif;color:#111;transform:scaleX(1.2973);transform-origin:0 0;">₫</span>
<span style="left:339.50px;top:204.30px;height:16px;line-height:16px;font:normal normal 12.4px/16px 'Liberation Serif', serif;color:#1f5fae;transform:scaleX(0.9544);transform-origin:0 0;text-decoration:underline;text-decoration-thickness:1px;text-underline-offset:1.2px;">Đăng ký</span>
<span style="left:432.60px;top:204.30px;height:16px;line-height:16px;font:normal normal 12.4px/16px 'Liberation Serif', serif;color:#111;transform:scaleX(0.9949);transform-origin:0 0;">Modem Wifi 6FPT Play BoxUltra Fast giảm ping</span>
<div style="left:16px;top:220.6px;width:148.6px;height:16px;overflow:hidden"><span style="left:7.80px;top:0.00px;height:16px;font:normal normal 12.4px/16px 'Liberation Serif', serif;color:#1f5fae;text-decoration:underline;text-decoration-thickness:1px;text-underline-offset:1.2px;">Gói F-Game F1 (1Gbps - 300Mbps)</span></div>
<span style="left:202.20px;top:220.60px;height:16px;line-height:16px;font:normal normal 12.4px/16px 'Liberation Serif', serif;color:#111;transform:scaleX(1.0352);transform-origin:0 0;">255.000</span>
<span style="left:244.30px;top:219.90px;height:16px;line-height:16px;font:normal normal 9px/16px 'Liberation Serif', serif;color:#111;transform:scaleX(1.2973);transform-origin:0 0;">₫</span>
<span style="left:339.50px;top:220.60px;height:16px;line-height:16px;font:normal normal 12.4px/16px 'Liberation Serif', serif;color:#1f5fae;transform:scaleX(0.9544);transform-origin:0 0;text-decoration:underline;text-decoration-thickness:1px;text-underline-offset:1.2px;">Đăng ký</span>
<span style="left:432.60px;top:220.60px;height:16px;line-height:16px;font:normal normal 12.4px/16px 'Liberation Serif', serif;color:#111;transform:scaleX(1.0058);transform-origin:0 0;">Modem Wifi 6Access PointUltra Fast giảm ping</span>
<div style="left:16px;top:236.9px;width:148.6px;height:16px;overflow:hidden"><span style="left:-1.40px;top:0.00px;height:16px;font:normal normal 12.4px/16px 'Liberation Serif', serif;color:#1f5fae;text-decoration:underline;text-decoration-thickness:1px;text-underline-offset:1.2px;">Combo F-Game F1 (1Gbps - 300Mbps)</span></div>
<span style="left:202.20px;top:236.90px;height:16px;line-height:16px;font:normal normal 12.4px/16px 'Liberation Serif', serif;color:#111;transform:scaleX(1.0352);transform-origin:0 0;">300.000</span>
<span style="left:244.30px;top:236.20px;height:16px;line-height:16px;font:normal normal 9px/16px 'Liberation Serif', serif;color:#111;transform:scaleX(1.2973);transform-origin:0 0;">₫</span>
<span style="left:339.50px;top:236.90px;height:16px;line-height:16px;font:normal normal 12.4px/16px 'Liberation Serif', serif;color:#1f5fae;transform:scaleX(0.9544);transform-origin:0 0;text-decoration:underline;text-decoration-thickness:1px;text-underline-offset:1.2px;">Đăng ký</span>
<span style="left:432.60px;top:236.90px;height:16px;line-height:16px;font:normal normal 12.4px/16px 'Liberation Serif', serif;color:#111;">Modem Wifi 6Access PointFPT Play BoxUltra Fast giảm ping</span>
<svg style="left:0px;top:0px" width="800" height="450" viewBox="0 0 800 450"><rect x="62.45" y="154.75" width="428" height="97.3" fill="none" stroke="#217346" stroke-width="1.6"/><rect x="487.8" y="249.4" width="5.4" height="5.4" fill="#fff"/><rect x="488.8" y="250.4" width="4" height="4" fill="#217346"/></svg>
</div></body></html>
